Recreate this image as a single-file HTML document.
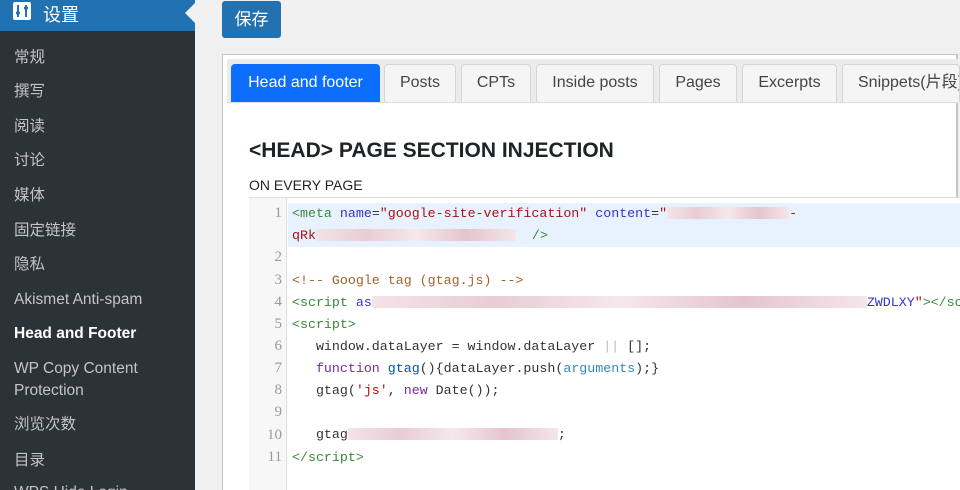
<!DOCTYPE html>
<html style="width:960px;height:490px;overflow:hidden"><head><meta charset="utf-8"><style>
*{box-sizing:border-box;margin:0;padding:0}
body{width:960px;height:490px;overflow:hidden;background:#f0f0f1;font-family:"Liberation Sans","Noto Sans CJK SC",sans-serif;position:relative}
#sb{position:absolute;left:0;top:0;width:195px;height:490px;background:#2c3338;overflow:hidden}
#top{position:absolute;left:0;top:0;width:195px;height:31px;background:#2271b1;color:#fff;font-size:18px}
#top svg{position:absolute;left:13px;top:2px}
#top span{position:absolute;left:43px;top:1px}
#arrow{position:absolute;left:185px;top:3px;width:0;height:0;border-top:10px solid transparent;border-bottom:10px solid transparent;border-right:10px solid #f0f0f1}
.mi{position:absolute;left:14px;color:#c3c4c7;font-size:15.5px;line-height:22px}
.mi.b{color:#fff;font-weight:bold}
#save{position:absolute;left:222px;top:1px;width:59px;height:37px;background:#2271b1;color:#fff;border-radius:3px;font-size:17px;text-align:center;line-height:37px}
#panel{position:absolute;left:222px;top:54px;width:736px;height:436px;background:#fff;border:1px solid #c3c4c7;border-bottom:none;border-right:2px solid #c3c4c7}
#tabbar{position:absolute;left:227px;top:59px;width:731px;height:44px;background:#ececec;border-bottom:1px solid #ddd}
.tab{position:absolute;top:64px;height:38px;background:#f5f5f5;border:1px solid #d5d5d5;border-bottom:none;border-radius:4px 4px 0 0;color:#444;font-size:16px;text-align:center;line-height:36px;white-space:nowrap;overflow:hidden}
.tab.a{background:#0d6efd;color:#fff;border-color:#0d6efd}
h2{position:absolute;left:249px;top:139px;font-size:21px;font-weight:bold;color:#1d2327}
#oep{position:absolute;left:249px;top:177px;font-size:14px;color:#1d2327}
#code{position:absolute;left:249px;top:197px;width:711px;height:293px;border-top:1px solid #ddd;border-left:1px solid #ddd;background:#fff}
#gut{position:absolute;left:249px;top:198px;width:38px;height:292px;background:#f7f7f7;border-right:1px solid #ddd}
#hl{position:absolute;left:288px;top:203px;width:672px;height:44px;background:#e8f2ff}
.ln{position:absolute;left:249px;width:33px;text-align:right;font-family:"Liberation Serif",serif;font-size:15px;color:#999}
.cl{position:absolute;left:292px;font-family:"Liberation Mono",monospace;font-size:13.3px;color:#333;white-space:pre}
.tg{color:#3a8a3a}.at{color:#3333cc}.st{color:#a11}.cm{color:#a0632a}.kw{color:#7a2a9a}.fn{color:#0055aa}.bl{color:#3388bb}
.blur{display:inline-block;height:12px;background:linear-gradient(90deg,#f3e4e7,#e8cdd3,#f5e8ea,#e5c5cd,#f4e6e9);vertical-align:middle}
</style></head><body>
<div id="sb">
<div id="top"><svg width="18" height="18" viewBox="0 0 18 18"><rect width="18" height="18" rx="2" fill="#fff"/><path d="M5 3v12M13 3v12" stroke="#2271b1" stroke-width="2"/><path d="M3 11h4M11 6h4" stroke="#2271b1" stroke-width="2.5"/></svg><span>设置</span></div>
<div class="mi" style="top:47px">常规</div>
<div class="mi" style="top:81px">撰写</div>
<div class="mi" style="top:116px">阅读</div>
<div class="mi" style="top:150px">讨论</div>
<div class="mi" style="top:185px">媒体</div>
<div class="mi" style="top:220px">固定链接</div>
<div class="mi" style="top:254px">隐私</div>
<div class="mi" style="top:289px">Akismet Anti-spam</div>
<div class="mi b" style="top:323px">Head and Footer</div>
<div class="mi" style="top:358px">WP Copy Content<br>Protection</div>
<div class="mi" style="top:414px">浏览次数</div>
<div class="mi" style="top:450px">目录</div>
<div class="mi" style="top:482px">WPS Hide Login</div>
</div>
<div id="arrow"></div>
<div id="save">保存</div>
<div id="panel"></div>
<div id="tabbar"></div>
<div class="tab a" style="left:231px;width:149px">Head and footer</div>
<div class="tab" style="left:384px;width:72px">Posts</div>
<div class="tab" style="left:461px;width:70px">CPTs</div>
<div class="tab" style="left:536px;width:118px">Inside posts</div>
<div class="tab" style="left:659px;width:78px">Pages</div>
<div class="tab" style="left:742px;width:95px">Excerpts</div>
<div class="tab" style="left:842px;width:118px;text-align:left;padding-left:15px">Snippets(片段)</div>
<h2>&lt;HEAD&gt; PAGE SECTION INJECTION</h2>
<div id="oep">ON EVERY PAGE</div>
<div id="code"></div>
<div id="gut"></div>
<div id="hl"></div>
<div class="ln" style="top:205px">1</div>
<div class="ln" style="top:249px">2</div>
<div class="ln" style="top:272px">3</div>
<div class="ln" style="top:294px">4</div>
<div class="ln" style="top:316px">5</div>
<div class="ln" style="top:338px">6</div>
<div class="ln" style="top:360px">7</div>
<div class="ln" style="top:382px">8</div>
<div class="ln" style="top:404px">9</div>
<div class="ln" style="top:427px">10</div>
<div class="ln" style="top:449px">11</div>
<div class="cl" style="top:206px"><span class="tg">&lt;meta</span> <span class="at">name</span>=<span class="st">"google-site-verification"</span> <span class="at">content</span>=<span class="st">"<span class="blur" style="width:122px"></span>-</span></div>
<div class="cl" style="top:228px"><span class="st">qRk</span><span class="blur" style="width:200px"></span>  <span class="tg">/&gt;</span></div>
<div class="cl" style="top:273px"><span class="cm">&lt;!-- Google tag (gtag.js) --&gt;</span></div>
<div class="cl" style="top:295px"><span class="tg">&lt;script</span> <span class="at">as</span><span class="blur" style="width:495px"></span><span class="at">ZWDLXY</span><span class="st">"</span><span class="tg">&gt;&lt;/script&gt;</span></div>
<div class="cl" style="top:317px"><span class="tg">&lt;script&gt;</span></div>
<div class="cl" style="top:339px">   window.dataLayer = window.dataLayer <span style="color:#bbb">||</span> [];</div>
<div class="cl" style="top:361px">   <span class="kw">function</span> <span class="fn">gtag</span>(){dataLayer.push(<span class="bl">arguments</span>);}</div>
<div class="cl" style="top:383px">   gtag(<span class="st">'js'</span>, <span class="kw">new</span> Date());</div>
<div class="cl" style="top:427px">   gtag<span class="blur" style="width:210px"></span>;</div>
<div class="cl" style="top:450px"><span class="tg">&lt;/script&gt;</span></div>
</body></html>
